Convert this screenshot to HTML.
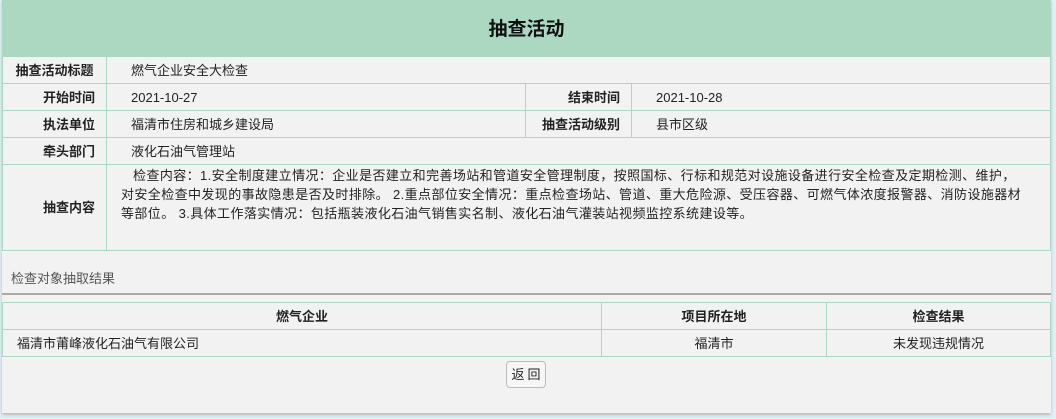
<!DOCTYPE html>
<html><head><meta charset="utf-8"><style>
*{margin:0;padding:0;box-sizing:border-box}
body{width:1056px;height:419px;background:#dff0f6;font-family:"Liberation Sans","Noto Sans CJK SC",sans-serif;font-size:13px;color:#222;position:relative;overflow:hidden}
.page{position:absolute;left:2px;top:0;width:1049px;height:413px;background:#f2f2f2;box-shadow:0 2px 3px #bbb}
.hd{height:57px;background:#acd8c2;text-align:center;font-size:19px;font-weight:bold;line-height:60px;color:#111}
table{border-collapse:collapse;width:1049px;table-layout:fixed}
td{border:1px solid #acd8c2;height:27px;padding:0;white-space:nowrap;line-height:25px}
.l{font-weight:bold;text-align:right;padding-right:11px}
.v{padding-left:24px}
.c{white-space:normal;line-height:19px;padding:1px 6px 8px 14px;vertical-align:top;letter-spacing:0.4px}
.sec{height:44px;line-height:28px;padding:14px 0 0 9px;color:#555;font-size:13px;border-bottom:2px solid #aaa}
.t2{margin-top:7px}
.t2 td{text-align:center}
.btn{position:absolute;left:506px;top:361px;width:40px;height:27px;border:1px solid #bbb;border-radius:4px;background:#f6f6f6;text-align:center;line-height:25px;letter-spacing:3px;padding-left:3px}
</style></head><body>
<div class="page">
<div class="hd">抽查活动</div>
<table style="margin-top:-1px">
<colgroup><col style="width:104px"><col style="width:419px"><col style="width:106px"><col></colgroup>
<tr><td class="l" style="text-align:center;padding-right:0">抽查活动标题</td><td class="v" colspan="3">燃气企业安全大检查</td></tr>
<tr><td class="l">开始时间</td><td class="v">2021-10-27</td><td class="l">结束时间</td><td class="v">2021-10-28</td></tr>
<tr><td class="l">执法单位</td><td class="v">福清市住房和城乡建设局</td><td class="l">抽查活动级别</td><td class="v">县市区级</td></tr>
<tr><td class="l">牵头部门</td><td class="v" colspan="3">液化石油气管理站</td></tr>
<tr><td class="l" style="height:86px;line-height:19px">抽查内容</td><td class="c" colspan="3">&nbsp;&nbsp;&nbsp;检查内容：1.安全制度建立情况：企业是否建立和完善场站和管道安全管理制度，按照国标、行标和规范对设施设备进行安全检查及定期检测、维护，<br>对安全检查中发现的事故隐患是否及时排除。 2.重点部位安全情况：重点检查场站、管道、重大危险源、受压容器、可燃气体浓度报警器、消防设施器材<br>等部位。 3.具体工作落实情况：包括瓶装液化石油气销售实名制、液化石油气灌装站视频监控系统建设等。</td></tr>
</table>
<div class="sec">检查对象抽取结果</div>
<table class="t2">
<colgroup><col style="width:599px"><col style="width:225px"><col></colgroup>
<tr><td style="font-weight:bold">燃气企业</td><td style="font-weight:bold">项目所在地</td><td style="font-weight:bold">检查结果</td></tr>
<tr><td style="text-align:left;padding-left:14px">福清市莆峰液化石油气有限公司</td><td>福清市</td><td>未发现违规情况</td></tr>
</table>
</div>
<div class="btn">返回</div>
</body></html>
